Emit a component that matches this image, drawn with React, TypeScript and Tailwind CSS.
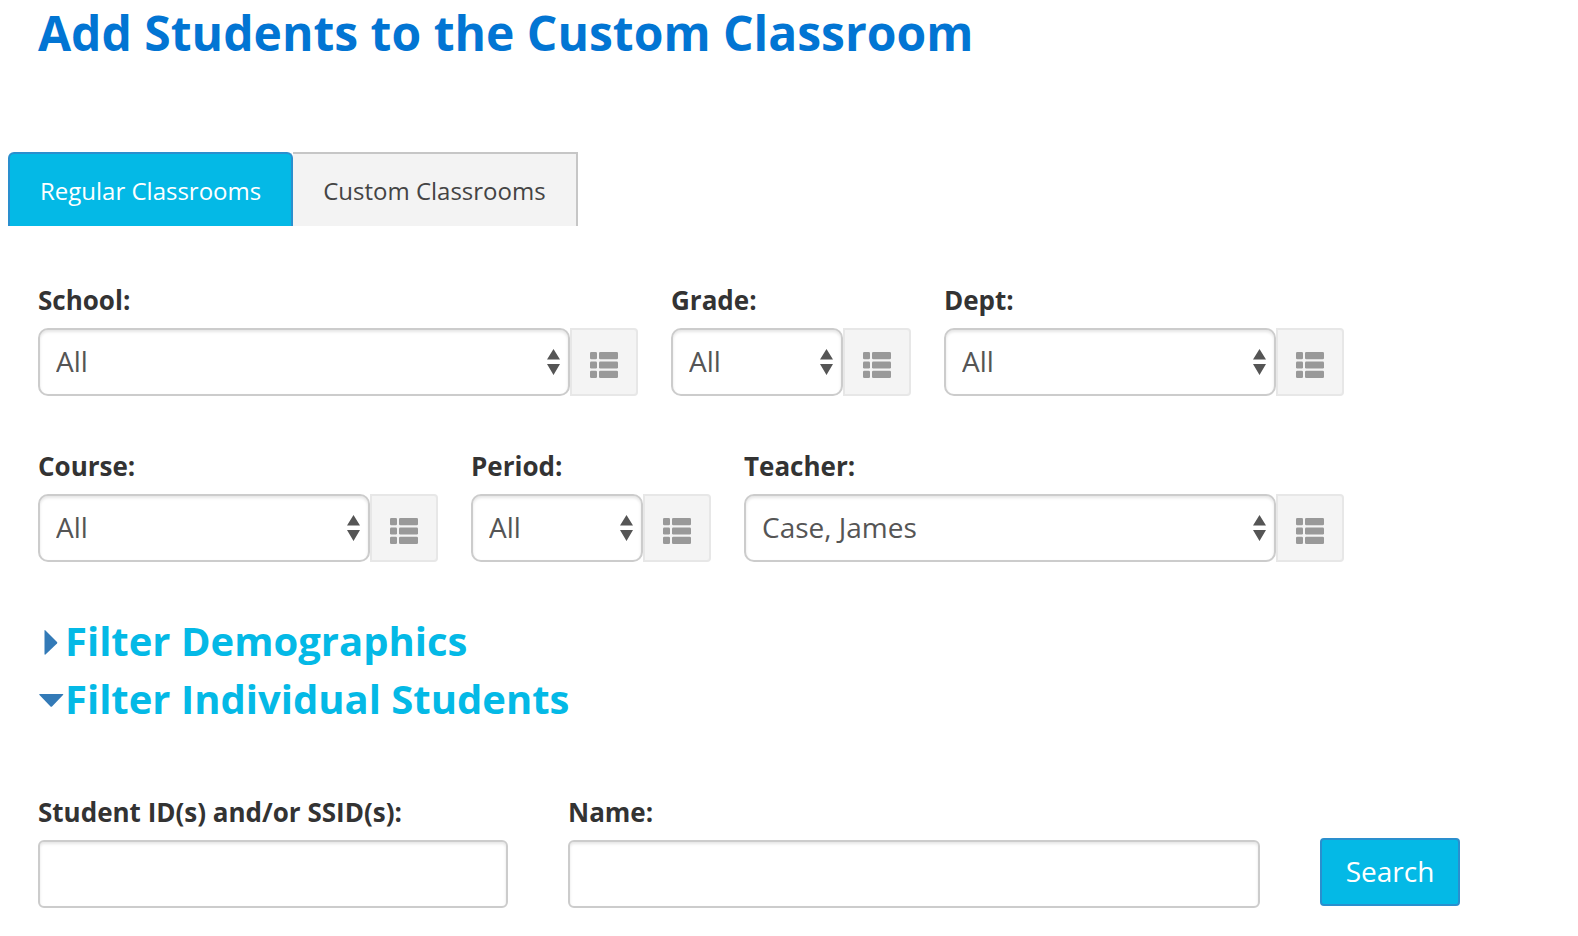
interface FilterSelectProps {
  id: string;
  label: string;
  options: string[];
}

function ListIcon() {
  return (
    <svg width="28" height="26" viewBox="0 0 28 26" fill="#999999" aria-hidden="true">
      {[0, 9.4, 18.8].map((y) => (
        <g key={y}>
          <rect x="0" y={y} width="7" height="7.2" rx="1.3" />
          <rect x="9" y={y} width="19" height="7.2" rx="1.3" />
        </g>
      ))}
    </svg>
  );
}

function FilterSelect({ id, label, options }: FilterSelectProps) {
  return (
    <div className="min-w-0">
      <label htmlFor={id} className="block mb-2 text-[26px] leading-10 font-bold text-[#333333]">
        {label}
      </label>
      <div className="flex">
        <div className="relative flex-1 min-w-0">
          <select
            id={id}
            className="block w-full h-[68px] appearance-none rounded-[10px] border-2 border-[#cccccc] bg-white pl-4 pr-9 pb-0.5 text-[28px] text-[#555555] shadow-[inset_0_2px_3px_rgba(0,0,0,0.1)]"
          >
            {options.map((option) => (
              <option key={option}>{option}</option>
            ))}
          </select>
          <svg
            className="absolute right-[10px] top-[21px] pointer-events-none"
            width="13"
            height="26"
            viewBox="0 0 13 26"
            fill="#555555"
            aria-hidden="true"
          >
            <path d="M6.5 0L13 10.5H0zM0 15h13L6.5 26z" />
          </svg>
        </div>
        <button
          type="button"
          aria-label={`${label} list`}
          className="flex h-[68px] w-[68px] shrink-0 items-center justify-center rounded-r-[4px] border-2 border-[#e7e7e7] bg-[#f4f4f4] pt-1.5"
        >
          <ListIcon />
        </button>
      </div>
    </div>
  );
}

export default function App() {
  return (
    <main className="bg-white px-2 pb-7 font-['Open_Sans','Noto_Sans',sans-serif]">
      <h1 className="pl-[30px] text-5xl leading-[66px] font-bold text-[#0275d3]">
        Add Students to the Custom Classroom
      </h1>

      <nav className="mt-[86px] flex h-[74px] text-2xl">
        <button
          type="button"
          className="rounded-t-[6px] border-2 border-b-0 border-[#2a8fce] bg-[#04b9e6] px-[30px] pt-0.5 text-white"
        >
          Regular Classrooms
        </button>
        <button
          type="button"
          className="border-t-2 border-r-2 border-[#c6c6c6] bg-[#f3f3f3] px-[30px] pt-0.5 text-[#444444]"
        >
          Custom Classrooms
        </button>
      </nav>

      <form className="px-[30px] pt-[54px]" onSubmit={(e) => e.preventDefault()}>
        <div className="grid max-w-[1306px] grid-cols-[600fr_240fr_400fr] gap-x-[33px]">
          <FilterSelect id="school" label="School:" options={['All']} />
          <FilterSelect id="grade" label="Grade:" options={['All']} />
          <FilterSelect id="dept" label="Dept:" options={['All']} />
        </div>
        <div className="mt-[50px] grid max-w-[1306px] grid-cols-[400fr_240fr_600fr] gap-x-[33px]">
          <FilterSelect id="course" label="Course:" options={['All']} />
          <FilterSelect id="period" label="Period:" options={['All']} />
          <FilterSelect id="teacher" label="Teacher:" options={['Case, James']} />
        </div>

        <div className="mt-[50px] flex flex-col items-start text-[40px] leading-[58px] font-bold text-[#04b9e6]">
          <button type="button" aria-expanded="false" className="flex items-center">
            <svg width="27" height="28" viewBox="0 0 27 28" fill="#337ab7" aria-hidden="true">
              <path d="M6.500 3.800Q6.500 2.500 7.500 3.500L19 15Q19.700 15.800 19 16.500L7.500 27.500Q6.500 28 6.500 27z" />
            </svg>
            Filter Demographics
          </button>
          <button type="button" aria-expanded="true" className="flex items-center">
            <svg width="27" height="28" viewBox="0 0 27 28" fill="#337ab7" aria-hidden="true">
              <path d="M2 9H24.500Q26 9 25 10L14 21.500Q13.250 22.200 12.500 21.500L1.500 10Q.5 9 2 9z" />
            </svg>
            Filter Individual Students
          </button>
        </div>

        <div className="mt-16 flex max-w-[1422px] items-end gap-[60px]">
          <div className="min-w-0 flex-[470]">
            <label htmlFor="student-ids" className="block mb-2 text-[26px] leading-10 font-bold text-[#333333]">
              Student ID(s) and/or SSID(s):
            </label>
            <input
              id="student-ids"
              type="text"
              className="block w-full h-[68px] rounded-[6px] border-2 border-[#cccccc] bg-white px-4 text-[28px] text-[#555555] shadow-[inset_0_2px_3px_rgba(0,0,0,0.1)]"
            />
          </div>
          <div className="min-w-0 flex-[692]">
            <label htmlFor="name" className="block mb-2 text-[26px] leading-10 font-bold text-[#333333]">
              Name:
            </label>
            <input
              id="name"
              type="text"
              className="block w-full h-[68px] rounded-[6px] border-2 border-[#cccccc] bg-white px-4 text-[28px] text-[#555555] shadow-[inset_0_2px_3px_rgba(0,0,0,0.1)]"
            />
          </div>
          <button
            type="submit"
            className="mb-0.5 h-[68px] w-[140px] shrink-0 rounded-[4px] border-2 border-[#2a8fce] bg-[#04b9e6] pb-0.5 text-[28px] text-white"
          >
            Search
          </button>
        </div>
      </form>
    </main>
  );
}
